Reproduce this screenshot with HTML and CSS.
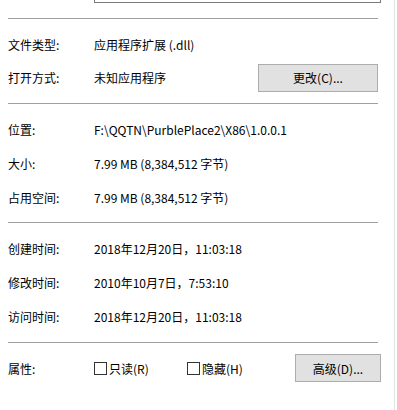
FILE: index.html
```html
<!DOCTYPE html>
<html lang="zh-CN">
<head>
<meta charset="utf-8">
<link rel="stylesheet" href="styles.css">
</head>
<body>
<div class="panel">
  <div class="name-row">
    <div class="name-box"></div>
  </div>
  <div class="sep"></div>
  <div class="section s1">
    <div class="row"><span class="label">文件类型:</span><span class="value">应用程序扩展 (.dll)</span></div>
    <div class="row"><span class="label">打开方式:</span><span class="value">未知应用程序</span><button class="btn btn-change">更改(C)...</button></div>
  </div>
  <div class="sep"></div>
  <div class="section">
    <div class="row"><span class="label">位置:</span><span class="value">F:\QQTN\PurblePlace2\X86\1.0.0.1</span></div>
    <div class="row"><span class="label">大小:</span><span class="value">7.99 MB (8,384,512 字节)</span></div>
    <div class="row"><span class="label">占用空间:</span><span class="value">7.99 MB (8,384,512 字节)</span></div>
  </div>
  <div class="sep"></div>
  <div class="section s3">
    <div class="row"><span class="label">创建时间:</span><span class="value">2018年12月20日，11:03:18</span></div>
    <div class="row"><span class="label">修改时间:</span><span class="value">2010年10月7日，7:53:10</span></div>
    <div class="row"><span class="label">访问时间:</span><span class="value">2018年12月20日，11:03:18</span></div>
  </div>
  <div class="sep"></div>
  <div class="section">
    <div class="row">
      <span class="label">属性:</span>
      <label class="check c1"><span class="box"></span>只读(R)</label>
      <label class="check c2"><span class="box"></span>隐藏(H)</label>
      <button class="btn btn-adv">高级(D)...</button>
    </div>
  </div>
</div>
</body>
</html>
```

FILE: styles.css
```css
html, body {
  margin: 0;
  padding: 0;
  background: #fff;
}
body {
  width: 397px;
  height: 410px;
  overflow: hidden;
  font-family: "Noto Sans CJK SC", "Noto Sans", sans-serif;
  font-size: 12px;
  color: #000;
}
.panel {
  width: 395px;
  height: 410px;
  border-right: 1px solid #e3e3e3;
  box-sizing: border-box;
  padding-left: 8px;
}
.name-row {
  height: 3px;
  overflow: hidden;
  display: flex;
  align-items: flex-end;
  padding-left: 86px;
}
.name-box {
  flex: none;
  width: 287px;
  height: 22px;
  border: 1px solid #7a7a7a;
  box-sizing: border-box;
}
.sep {
  width: 370px;
  height: 1px;
  background: #a0a0a0;
}
.name-row + .sep {
  margin-top: 15px;
}
.section {
  padding: 8px 0;
}
.s1 {
  padding: 9px 0;
}
.s1 .row {
  height: 33px;
}
.s3 {
  padding: 8px 0 9px;
}
.row {
  height: 34px;
  display: flex;
  align-items: center;
  white-space: nowrap;
}
.label {
  width: 86px;
  flex: none;
}
.value {
  flex: none;
}
.btn {
  font: inherit;
  color: #000;
  background: #e1e1e1;
  border: 1px solid #adadad;
  height: 28px;
  padding: 0;
  box-sizing: border-box;
}
.btn-change {
  margin-left: auto;
  margin-right: 16px;
  width: 120px;
}
.btn-adv {
  margin-left: auto;
  margin-right: 13px;
  width: 86px;
}
.check {
  display: flex;
  align-items: center;
}
.box {
  width: 13px;
  height: 13px;
  border: 1px solid #333;
  box-sizing: border-box;
  background: #fff;
  margin-right: 2px;
}
.c1 {
  width: 93px;
}
```
